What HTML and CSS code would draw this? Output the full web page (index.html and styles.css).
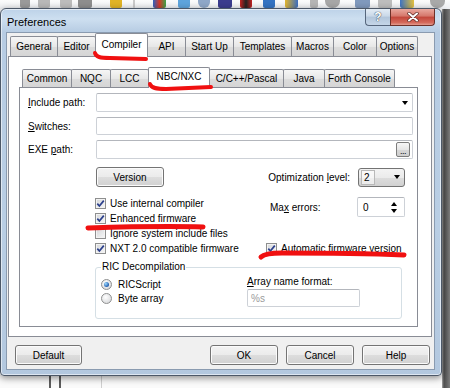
FILE: index.html
```html
<!DOCTYPE html>
<html>
<head>
<meta charset="utf-8">
<title>Preferences</title>
<link rel="stylesheet" href="styles.css">
</head>
<body>
<div class="toolbar">
  <span class="ic ic1"></span><span class="ic ic2"></span><span class="ic ic3"></span><span class="ic ic4"></span>
  <span class="ic ic5"></span><span class="ic ic6"></span><span class="ic ic7"></span><span class="ic ic8"></span>
  <span class="ic ic9"></span><span class="ic ic10"></span><span class="ic ic11"></span><span class="ic ic12"></span>
  <span class="ic ic13"></span><span class="ic ic14"></span><span class="ic ic15"></span><span class="ic ic16"></span>
  <span class="ic ic17"></span><span class="ic ic18"></span><span class="ic ic19"></span>
</div>
<div class="desk-right"></div>
<div class="desk-bottom"><span class="bline"></span><span class="bline"></span><span class="bline light"></span></div>

<div class="window">
  <div class="titlebar">
    <span class="title">Preferences</span>
    <div class="caption-btns">
      <span class="cbtn help">?</span>
      <span class="cbtn close">
        <svg width="12" height="10" viewBox="0 0 12 10"><path d="M2 1.5 L10 8.5 M10 1.5 L2 8.5" stroke="#5a2a25" stroke-width="3.4" stroke-linecap="round"/><path d="M2 1.5 L10 8.5 M10 1.5 L2 8.5" stroke="#fff" stroke-width="2" stroke-linecap="round"/></svg>
      </span>
    </div>
  </div>

  <div class="client">
    <div class="tabs outer-tabs">
      <span class="tab t-general">General</span>
      <span class="tab t-editor">Editor</span>
      <span class="tab active t-compiler">Compiler</span>
      <span class="tab t-api">API</span>
      <span class="tab t-startup">Start Up</span>
      <span class="tab t-templates">Templates</span>
      <span class="tab t-macros">Macros</span>
      <span class="tab t-color">Color</span>
      <span class="tab t-options">Options</span>
    </div>
    <div class="page outer-page">
      <div class="tabs inner-tabs">
        <span class="tab t-common">Common</span>
        <span class="tab t-nqc">NQC</span>
        <span class="tab t-lcc">LCC</span>
        <span class="tab active t-nbc">NBC/NXC</span>
        <span class="tab t-cpp">C/C++/Pascal</span>
        <span class="tab t-java">Java</span>
        <span class="tab t-forth">Forth Console</span>
      </div>
      <div class="page inner-page">
        <div class="field-row">
          <span class="label"><u>I</u>nclude path:</span>
          <span class="field"><span class="drop-arrow"></span></span>
        </div>
        <div class="field-row short">
          <span class="label"><u>S</u>witches:</span>
          <span class="field"></span>
        </div>
        <div class="field-row">
          <span class="label">EXE <u>p</u>ath:</span>
          <span class="field"><span class="dots-btn">...</span></span>
        </div>

        <div class="version-row">
          <span class="btn version-btn">Version</span>
          <span class="opt-label">Optimization <u>l</u>evel:</span>
          <span class="combo"><span class="combo-value">2</span><span class="drop-arrow"></span></span>
        </div>

        <div class="lower">
          <div class="checks">
            <label class="check-row"><span class="cb on"><svg width="9" height="9" viewBox="0 0 9 9"><path d="M1.3 4.6 L3.4 7 L7.8 1.6" fill="none" stroke="#2b3f8c" stroke-width="1.7"/></svg></span>Use internal compiler</label>
            <label class="check-row"><span class="cb on"><svg width="9" height="9" viewBox="0 0 9 9"><path d="M1.3 4.6 L3.4 7 L7.8 1.6" fill="none" stroke="#2b3f8c" stroke-width="1.7"/></svg></span>Enhanced firmware</label>
            <label class="check-row"><span class="cb"></span>Ignore system include files</label>
            <label class="check-row"><span class="cb on"><svg width="9" height="9" viewBox="0 0 9 9"><path d="M1.3 4.6 L3.4 7 L7.8 1.6" fill="none" stroke="#2b3f8c" stroke-width="1.7"/></svg></span>NXT 2.0 compatible firmware</label>
          </div>
          <div class="right-col">
            <div class="max-row">
              <span class="max-label">Ma<u>x</u> errors:</span>
              <span class="spin"><span class="spin-value">0</span><span class="spin-arrows"><span class="up"></span><span class="down"></span></span></span>
            </div>
            <label class="check-row auto-row"><span class="cb on"><svg width="9" height="9" viewBox="0 0 9 9"><path d="M1.3 4.6 L3.4 7 L7.8 1.6" fill="none" stroke="#2b3f8c" stroke-width="1.7"/></svg></span>Automatic firmware version</label>
          </div>
        </div>

        <fieldset class="group">
          <legend>RIC Decompilation</legend>
          <div class="group-body">
            <div class="radios">
              <label class="radio-row"><span class="rb on"></span>RICScript</label>
              <label class="radio-row"><span class="rb"></span>Byte array</label>
            </div>
            <div class="array-col">
              <span class="array-label"><u>A</u>rray name format:</span>
              <span class="field array-field"><span class="placeholder">%s</span></span>
            </div>
          </div>
        </fieldset>
      </div>
    </div>
    <div class="buttons">
      <span class="btn dlg-btn">Default</span>
      <span class="btn dlg-btn push">OK</span>
      <span class="btn dlg-btn">Cancel</span>
      <span class="btn dlg-btn">Help</span>
    </div>
  </div>
</div>

<svg class="annot" width="450" height="388" viewBox="0 0 450 388">
  <g fill="none" stroke="#f01010" stroke-linecap="round" stroke-linejoin="round">
    <path d="M95 53 C96 57 100 58 110 58 L146 59" stroke-width="4"/>
    <path d="M150 84 C151 88 156 89 166 89 L211 87" stroke-width="4"/>
    <path d="M88 228 C120 227 170 226 203 227" stroke-width="5"/>
    <path d="M261 257 C264 254 270 253 282 253 C330 253 380 254 404 255" stroke-width="5"/>
  </g>
</svg>
</body>
</html>
```
FILE: styles.css
```css
* { box-sizing: border-box; }

body {
  margin: 0;
  width: 450px;
  height: 388px;
  overflow: hidden;
  position: relative;
  background: #f6f6f6;
  font-family: "Liberation Sans", Arial, sans-serif;
  font-size: 10px;
  color: #000;
}

/* background application toolbar (mostly hidden behind dialog) */
.toolbar {
  height: 9px;
  display: flex;
  align-items: flex-start;
  background: linear-gradient(#fbfbfb, #eceef1);
}
.ic { height: 8px; border-radius: 0 0 2px 2px; flex: none; }
.ic1 { margin-left: 20px; width: 10px; background: #9a9a9a; }
.ic2 { margin-left: 8px; width: 12px; background: #b8b8b8; }
.ic3 { margin-left: 10px; width: 12px; background: #bcbcbc; }
.ic4 { margin-left: 6px; width: 14px; background: #8d8d8d; }
.ic5 { margin-left: 18px; width: 12px; background: #e0b326; }
.ic6 { margin-left: 11px; width: 2px; background: #c9c9c9; }
.ic7 { margin-left: 18px; width: 13px; background: linear-gradient(90deg, #2e62c0, #d33a2a 50%, #3aa548); }
.ic8 { margin-left: 12px; width: 12px; background: #5ea4dc; }
.ic9 { margin-left: 8px; width: 12px; background: #8fa7c8; border-radius: 0 0 6px 6px; }
.ic10 { margin-left: 8px; width: 14px; background: #3b3c8e; }
.ic11 { margin-left: 8px; width: 12px; background: linear-gradient(90deg, #c52222, #222 50%, #c52222); }
.ic12 { margin-left: 11px; width: 12px; background: #3473c2; }
.ic13 { margin-left: 10px; width: 13px; background: linear-gradient(90deg, #e3b52c, #3c6fc0); }
.ic14 { margin-left: 12px; width: 8px; background: #b5b5b5; }
.ic15 { margin-left: 7px; width: 15px; background: #a7a7a7; border-radius: 0 0 7px 7px; }
.ic16 { margin-left: 15px; width: 15px; background: #8099bd; }
.ic17 { margin-left: 8px; width: 14px; background: #bdbdbd; }
.ic18 { margin-left: 8px; width: 14px; background: linear-gradient(90deg, #3d74c4, #e4c03c); }
.ic19 { margin-left: 16px; width: 15px; background: #a9a9a9; border-radius: 0 0 7px 7px; }

.desk-right {
  position: absolute;
  top: 9px;
  right: 0;
  bottom: 0;
  width: 8px;
  background: linear-gradient(90deg, #a5a5a5, #4f4f4f 2px, #636363 5px, #7c7c7c);
}

.desk-bottom {
  position: absolute;
  left: 0;
  right: 8px;
  top: 376px;
  bottom: 0;
  background: #fafafa;
  display: flex;
  padding-left: 49px;
  gap: 8px;
}
.bline { width: 2px; height: 100%; background: #5c5c5c; }
.bline.light { margin-left: 32px; width: 1px; background: #cfcfcf; }

/* dialog window */
.window {
  position: absolute;
  left: 0;
  top: 8px;
  width: 442px;
  height: 368px;
  border: 1px solid #4c5868;
  border-radius: 6px 6px 4px 4px;
  background: linear-gradient(180deg, #bdd2e8 0px, #cddff0 10px, #b7cce3 23px, #b9cee4 60%, #b3c8df 100%);
  box-shadow: 0 2px 7px rgba(0, 0, 0, 0.45), inset 0 0 0 1px rgba(255, 255, 255, 0.55);
  display: flex;
  flex-direction: column;
}

.titlebar {
  height: 24px;
  display: flex;
  justify-content: space-between;
  align-items: flex-start;
  flex: none;
}
.title {
  padding-left: 6px;
  margin-top: 7px;
  font-size: 11px;
  line-height: 12px;
  color: #000;
}
.caption-btns { display: flex; margin-right: 6px; }
.cbtn {
  height: 17px;
  display: flex;
  align-items: center;
  justify-content: center;
  border: 1px solid #56667c;
  border-top: none;
}
.cbtn.help {
  width: 25px;
  border-radius: 0 0 0 4px;
  border-right: none;
  background: linear-gradient(#e3ecf5, #c9d8e8 45%, #b2c5da 50%, #c5d6e8);
  color: #fff;
  font-weight: bold;
  font-size: 12px;
  text-shadow: 0 0 1px #2b3b50, 0 0 1px #2b3b50;
}
.cbtn.close {
  width: 45px;
  border-radius: 0 0 4px 0;
  border-color: #6e3028;
  background: linear-gradient(#e9a89e, #d5766a 45%, #c2463a 50%, #d56a5c 85%, #e39c8f);
}

.client {
  margin: 0 7px 0 6px;
  height: 336px;
  flex: none;
  background: #f0f0f0;
  box-shadow: 0 0 0 1px #8a9bb0;
  padding-top: 3px;
}

/* tabs */
.tabs { display: flex; height: 20px; align-items: flex-start; }
.outer-tabs { padding-left: 3px; }
.tab {
  height: 20px;
  padding-top: 1px;
  line-height: 18px;
  text-align: center;
  white-space: nowrap;
  border: 1px solid #898c95;
  border-bottom: none;
  border-radius: 2px 2px 0 0;
  margin-right: -1px;
  background: linear-gradient(#f6f6f6, #e7e7e7 50%, #dcdcdc 51%, #d5d5d5);
  flex: none;
}
.tab.active {
  position: relative;
  z-index: 1;
  margin-top: -3px;
  height: 24px;
  padding-top: 2px;
  background: #fff;
}
.t-general { width: 48px; }
.t-editor { width: 39px; }
.t-compiler { width: 53px; }
.t-api { width: 39px; }
.t-startup { width: 49px; }
.t-templates { width: 59px; }
.t-macros { width: 43px; }
.t-color { width: 44px; }
.t-options { width: 42px; }

.inner-tabs { padding-left: 3px; }
.inner-tabs .tab { margin-top: 2px; height: 18px; padding-top: 0; line-height: 17px; }
.inner-tabs .tab.active { margin-top: 0; height: 21px; padding-top: 0; }
.t-common { width: 50px; }
.t-nqc { width: 40px; }
.t-lcc { width: 39px; }
.t-nbc { width: 62px; }
.t-cpp { width: 75px; }
.t-java { width: 42px; }
.t-forth { width: 71px; }

.page {
  background: #fff;
  border: 1px solid #898c95;
}
.outer-page {
  margin-left: 1px;
  width: 424px;
  height: 281px;
  padding: 10px 0 0 10px;
}
.inner-page {
  width: 399px;
  height: 240px;
  padding: 5px 4px 0 8px;
  overflow: hidden;
}

/* fields */
.field-row { display: flex; align-items: center; height: 19px; }
.field-row + .field-row { margin-top: 5px; }
.field-row.short { height: 18px; }
.label { width: 68px; flex: none; white-space: nowrap; }
.field {
  flex: 1;
  height: 100%;
  border: 1px solid #cdd1d7;
  border-top-color: #b3b6bc;
  border-radius: 2px;
  background: #fff;
  display: flex;
  align-items: center;
  justify-content: flex-end;
}
.drop-arrow {
  width: 0;
  height: 0;
  border-left: 3.5px solid transparent;
  border-right: 3.5px solid transparent;
  border-top: 4px solid #000;
  margin-right: 4px;
}
.dots-btn {
  width: 14px;
  height: 15px;
  margin-right: 2px;
  border: 1px solid #7d7d7d;
  border-radius: 2px;
  background: linear-gradient(#f6f6f6, #e6e6e6 50%, #d8d8d8 51%, #cecece);
  font-size: 9px;
  line-height: 16px;
  text-align: center;
  letter-spacing: -0.5px;
}

.btn {
  display: flex;
  align-items: center;
  justify-content: center;
  border: 1px solid #747474;
  border-radius: 3px;
  background: linear-gradient(#f3f3f3, #ebebeb 50%, #dddddd 51%, #d1d1d1);
  box-shadow: inset 0 0 0 1px #fbfbfb;
  white-space: nowrap;
}

.version-row {
  display: flex;
  align-items: center;
  height: 20px;
  margin-top: 8px;
}
.version-btn { margin-left: 68px; width: 68px; height: 20px; }
.opt-label { margin-left: auto; }
.combo {
  width: 47px;
  height: 19px;
  margin: 0 8px 0 8px;
  border: 1px solid #737373;
  border-radius: 3px;
  background: linear-gradient(#f3f3f3, #ebebeb 50%, #dddddd 51%, #d1d1d1);
  display: flex;
  align-items: center;
  justify-content: space-between;
  padding-left: 2px;
}
.combo-value {
  width: 14px;
  height: 15px;
  line-height: 14px;
  padding-left: 2px;
  border: 1px solid #b9b9b9;
  background: rgba(255, 255, 255, 0.55);
}
.combo .drop-arrow { margin-right: 4px; }

/* checkboxes */
.lower { display: flex; margin-top: 9px; }
.checks { margin-left: 67px; width: 171px; flex: none; }
.check-row { display: flex; align-items: center; height: 15px; white-space: nowrap; }
.cb {
  width: 11px;
  height: 11px;
  margin-right: 4px;
  flex: none;
  border: 1px solid #8e8f8f;
  background: linear-gradient(135deg, #d4d6d9, #f7f7f7);
  box-shadow: inset 0 0 0 1px #f3f3f3;
  display: flex;
  align-items: center;
  justify-content: center;
}
.right-col { flex: 1; padding-right: 8px; }
.max-row { display: flex; align-items: center; height: 20px; margin-top: 1px; }
.max-label { padding-left: 4px; }
.spin {
  margin-left: auto;
  width: 48px;
  height: 20px;
  border: 1px solid #cdd1d7;
  border-top-color: #b3b6bc;
  border-radius: 2px;
  display: flex;
  align-items: center;
  justify-content: space-between;
  padding: 0 7px 0 5px;
}
.spin-arrows { display: flex; flex-direction: column; gap: 3px; }
.spin-arrows .up {
  width: 0; height: 0;
  border-left: 3px solid transparent;
  border-right: 3px solid transparent;
  border-bottom: 4px solid #000;
}
.spin-arrows .down {
  width: 0; height: 0;
  border-left: 3px solid transparent;
  border-right: 3px solid transparent;
  border-top: 4px solid #000;
}
.auto-row { margin-top: 24px; }

/* group box */
.group {
  margin: 5px 0 0 67px;
  width: 307px;
  height: 58px;
  border: 1px solid #d5dfe5;
  border-radius: 3px;
  padding: 0 5px;
  min-inline-size: 0;
}
.group legend {
  padding: 0 1px;
  line-height: 12px;
  font-size: 10px;
}
.group-body { display: flex; }
.radios { width: 146px; padding-top: 4px; flex: none; }
.radio-row { display: flex; align-items: center; height: 14px; white-space: nowrap; }
.rb {
  width: 11px;
  height: 11px;
  border-radius: 50%;
  margin-right: 6px;
  border: 1px solid #8e8f8f;
  background: radial-gradient(circle at 40% 35%, #ffffff, #dedfe1 70%, #cfd0d3);
  display: flex;
  align-items: center;
  justify-content: center;
}
.rb.on::after {
  content: "";
  width: 5px;
  height: 5px;
  border-radius: 50%;
  background: radial-gradient(circle at 35% 35%, #9fdcff, #2a66b5 65%, #183f80);
}
.array-col { display: flex; flex-direction: column; padding-top: 3px; }
.array-label { line-height: 12px; white-space: nowrap; }
.array-field {
  margin-top: 1px;
  width: 113px;
  height: 18px;
  flex: none;
  justify-content: flex-start;
}
.placeholder { color: #9a9a9a; padding-left: 3px; }

/* dialog buttons */
.buttons {
  display: flex;
  gap: 8px;
  margin-top: 8px;
  padding: 0 4px 0 8px;
  height: 20px;
}
.dlg-btn { width: 68px; height: 20px; }
.dlg-btn:first-child { width: 67px; }
.push { margin-left: auto; }

/* red annotations drawn over the screenshot */
.annot {
  position: absolute;
  left: 0;
  top: 0;
  z-index: 10;
  pointer-events: none;
}
```
